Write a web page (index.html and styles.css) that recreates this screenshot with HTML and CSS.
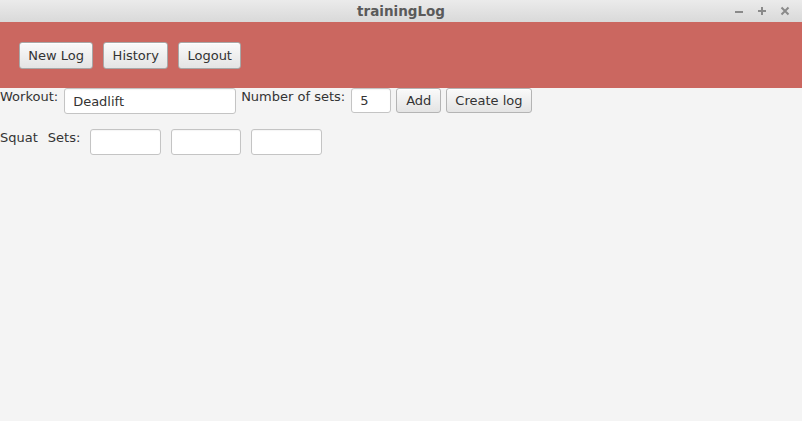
FILE: index.html
```html
<!DOCTYPE html>
<html lang="en">
<head>
<meta charset="utf-8">
<title>trainingLog</title>
<link rel="stylesheet" href="styles.css">
</head>
<body>
<div class="window">
  <div class="titlebar">
    <div></div>
    <div class="title">trainingLog</div>
    <div class="controls">
      <svg width="10" height="10" viewBox="0 0 10 10"><rect x="1" y="5" width="8" height="2" fill="#8a8a8a"/></svg>
      <svg width="10" height="10" viewBox="0 0 10 10"><rect x="1" y="4" width="8" height="2" fill="#8a8a8a"/><rect x="4" y="1" width="2" height="8" fill="#8a8a8a"/></svg>
      <svg width="10" height="10" viewBox="0 0 10 10"><path d="M1.5 1.5 L8.5 8.5 M8.5 1.5 L1.5 8.5" stroke="#8a8a8a" stroke-width="2"/></svg>
    </div>
  </div>
  <div class="header">
    <button class="btn btn-lg">New Log</button>
    <button class="btn btn-lg">History</button>
    <button class="btn btn-lg">Logout</button>
  </div>
  <div class="content">
    <div class="row row-workout">
      <span class="label">Workout:</span>
      <div class="field field-workout">Deadlift</div>
      <span class="label">Number of sets:</span>
      <div class="field field-num">5</div>
      <button class="btn btn-add">Add</button>
      <button class="btn">Create log</button>
    </div>
    <div class="row row-sets">
      <span class="label">Squat</span>
      <span class="label">Sets:</span>
      <div class="field field-set"></div>
      <div class="field field-set"></div>
      <div class="field field-set"></div>
    </div>
  </div>
</div>
</body>
</html>
```
FILE: styles.css
```css
* { box-sizing: border-box; }
html, body {
  margin: 0;
  padding: 0;
  width: 802px;
  height: 421px;
  overflow: hidden;
  background: #f4f4f4;
  font-family: "DejaVu Sans", sans-serif;
  font-size: 13px;
  color: #333333;
}
.window {
  display: flex;
  flex-direction: column;
  height: 421px;
}
.titlebar {
  height: 22px;
  display: grid;
  grid-template-columns: 1fr auto 1fr;
  align-items: center;
  background: linear-gradient(#ebebeb, #d9d9d9);
}
.title {
  font-weight: bold;
  font-size: 13.5px;
  color: #5a5a5a;
  line-height: 22px;
}
.controls {
  display: flex;
  justify-content: flex-end;
  gap: 13px;
  padding-right: 12px;
}
.controls svg { display: block; }
.header {
  height: 66px;
  background: #cb6760;
  display: flex;
  align-items: flex-start;
  gap: 10px;
  padding: 20px 0 0 19px;
}
.btn {
  font-family: "DejaVu Sans", sans-serif;
  font-size: 13px;
  color: #333333;
  height: 25px;
  padding: 0 8px;
  border: 1px solid #b4b4b4;
  border-radius: 3px;
  background: linear-gradient(#fafafa, #e4e4e4);
  box-shadow: inset 0 1px 0 #ffffff;
  line-height: 1;
  margin: 0;
}
.btn-add { padding: 0 9px; }
.btn-lg {
  height: 27px;
  padding: 0 8.3px;
  border-color: #a8a8a8;
}
.content {
  display: flex;
  flex-direction: column;
  gap: 15px;
}
.row {
  display: flex;
  align-items: flex-start;
}
.row-workout { gap: 5px; }
.row-workout .label { padding-right: 1px; }
.row-sets { gap: 10px; }
.label {
  line-height: 15px;
  padding-top: 1px;
  white-space: nowrap;
}
.field {
  height: 26px;
  background: #ffffff;
  border: 1px solid #c4c4c4;
  border-radius: 3px;
  box-shadow: inset 0 1px 1px rgba(0,0,0,0.04);
  padding: 0 8px;
  display: flex;
  align-items: center;
  color: #333333;
}
.field-workout { width: 172px; }
.field-num { width: 40px; height: 25px; }
.field-set { width: 70.5px; }
```
